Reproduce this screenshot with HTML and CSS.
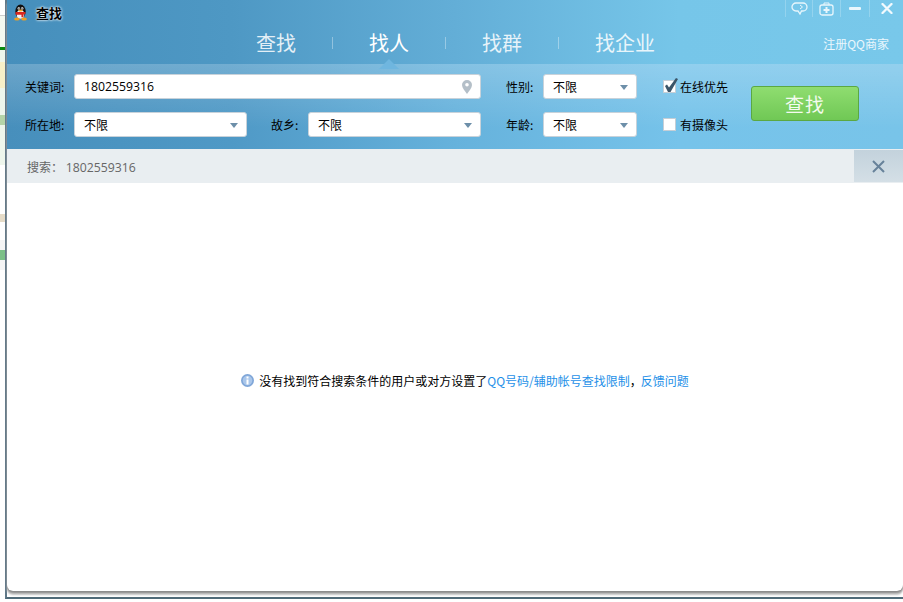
FILE: index.html
```html
<!DOCTYPE html>
<html lang="zh-CN">
<head>
  <meta charset="UTF-8" />
  <title>查找</title>
  <link rel="stylesheet" href="styles.css">
</head>
<body>
  <div class="stage">
    <div class="behind">
      <div class="strip strip-a"></div>
      <div class="strip strip-b"></div>
      <div class="strip strip-c"></div>
      <div class="strip strip-d"></div>
      <div class="strip strip-e"></div>
      <div class="strip strip-f"></div>
      <div class="strip strip-g"></div>
      <div class="strip strip-h"></div>
      <div class="strip strip-i"></div>
      <div class="strip strip-j"></div>
      <div class="strip strip-k"></div>
      <div class="strip strip-l"></div>
      <div class="strip strip-m"></div>
    </div>

    <div class="window">
      <div class="panel">
        <div class="banner">
          <div class="titlebar">
            <div class="title">
              <svg class="penguin" width="15" height="17" viewBox="0 0 16 18">
                <ellipse cx="8" cy="8" rx="5.5" ry="7.5" fill="#111"/>
                <ellipse cx="8" cy="11" rx="4" ry="4.6" fill="#f4f4f4"/>
                <circle cx="6.2" cy="4.6" r="1.3" fill="#fff"/>
                <circle cx="9.8" cy="4.6" r="1.3" fill="#fff"/>
                <circle cx="6.4" cy="4.8" r=".6" fill="#111"/>
                <circle cx="9.6" cy="4.8" r=".6" fill="#111"/>
                <ellipse cx="8" cy="6.8" rx="2.2" ry="1" fill="#f0a820"/>
                <path d="M2.8 8.5h10.4v2l-2 .5v3h-2.2v-2.6H2.8z" fill="#d8261c"/>
                <ellipse cx="4.2" cy="16" rx="3" ry="1.6" fill="#f0a020"/>
                <ellipse cx="11.8" cy="16" rx="3" ry="1.6" fill="#f0a020"/>
              </svg>
              <span class="title-text">查找</span>
            </div>
            <div class="controls">
              <div class="ctrl ctrl-feedback">
                <svg width="17" height="13" viewBox="0 0 17 13" fill="none" stroke="#e8f6fc" stroke-width="1.3">
                  <path d="M5 1h7a4 4 0 0 1 0 8h-1.500l-1.500 3-2-3H5a4 4 0 0 1 0-8z"/>
                  <path d="M9 3l2.500 2L9 7" stroke-width="1"/>
                </svg>
              </div>
              <div class="ctrl ctrl-add">
                <svg width="15" height="14" viewBox="0 0 15 14" fill="none" stroke="#e8f6fc">
                  <rect x="1" y="3" width="13" height="10" rx="2" stroke-width="1.300"/>
                  <path d="M5 3V1h5v2" stroke-width="1"/>
                  <path d="M7.500 5v6M4.500 8h6" stroke-width="2"/>
                </svg>
              </div>
              <div class="ctrl ctrl-min">
                <svg width="12" height="3" viewBox="0 0 12 3"><rect width="12" height="3" rx="1" fill="#eaf7fd"/></svg>
              </div>
              <div class="ctrl ctrl-close">
                <svg width="12" height="11" viewBox="0 0 12 11" stroke="#f2fafe" stroke-width="2.300" stroke-linecap="round">
                  <path d="M1.500 1l9 9M10.500 1l-9 9"/>
                </svg>
              </div>
            </div>
          </div>
          <div class="tabs">
            <a class="tab" href="#">查找</a>
            <span class="tab-sep"></span>
            <a class="tab active" href="#">找人</a>
            <span class="tab-sep"></span>
            <a class="tab" href="#">找群</a>
            <span class="tab-sep"></span>
            <a class="tab tab-last" href="#">找企业</a>
            <a class="register" href="#">注册QQ商家</a>
          </div>
        </div>

        <div class="filters">
          <div class="filter-rows">
            <div class="filter-row">
              <label class="field-label">关键词:</label>
              <div class="box keyword">
                <span class="number">1802559316</span>
                <svg width="10" height="14" viewBox="0 0 10 14">
                  <path d="M5 0a5 5 0 0 1 5 5c0 3-3 6-5 9-2-3-5-6-5-9a5 5 0 0 1 5-5z" fill="#b4bfc8"/>
                  <circle cx="5" cy="4.800" r="1.800" fill="#fff"/>
                </svg>
              </div>
              <label class="field-label short gap-sex">性别:</label>
              <div class="box select small"><span>不限</span><i class="caret"></i></div>
              <label class="check">
                <span class="checkbox">
                  <svg width="15" height="15" viewBox="0 0 15 15">
                    <path d="M1 8l2-1.500 2 3L12 0l2 1-7.500 13H4z" fill="#3b5468"/>
                  </svg>
                </span>
                在线优先
              </label>
            </div>
            <div class="filter-row">
              <label class="field-label">所在地:</label>
              <div class="box select wide"><span>不限</span><i class="caret"></i></div>
              <label class="field-label short gap-home">故乡:</label>
              <div class="box select wide"><span>不限</span><i class="caret"></i></div>
              <label class="field-label short gap-age">年龄:</label>
              <div class="box select small"><span>不限</span><i class="caret"></i></div>
              <label class="check"><span class="checkbox"></span>有摄像头</label>
            </div>
          </div>
          <button class="search-btn">查找</button>
        </div>

        <div class="subheader">
          <div class="query">搜索： <span class="number">1802559316</span></div>
          <div class="sub-close">
            <svg width="13" height="13" viewBox="0 0 13 13" stroke="#67829a" stroke-width="2">
              <path d="M1 1l11 11M12 1L1 12"/>
            </svg>
          </div>
        </div>

        <div class="results">
          <div class="message">
            <svg class="info" width="13" height="13" viewBox="0 0 13 13">
              <circle cx="6.500" cy="6.500" r="6.500" fill="#7fa6d8"/>
              <circle cx="6.500" cy="6.500" r="4.800" fill="#a9c6ea"/>
              <rect x="5.500" y="2.500" width="2" height="2" fill="#fff"/>
              <rect x="5.500" y="5.500" width="2" height="5" fill="#fff"/>
            </svg>
            <span>没有找到符合搜索条件的用户或对方设置了</span><a href="#">QQ号码/辅助帐号查找限制</a><span class="comma">，</span><a href="#">反馈问题</a>
          </div>
        </div>
      </div>
    </div>
  </div>
</body>
</html>
```

FILE: styles.css
```css
body {
  margin: 0;
  background-color: #fff;
  font-family: "Noto Sans CJK SC", sans-serif;
  font-size: 12px;
  color: #000;
  overflow: hidden;
}

a {
  text-decoration: none;
}

.stage {
  display: flex;
  height: 599px;
}

/* the page showing behind the window */
.behind {
  width: 5px;
  flex-shrink: 0;
}

.strip-a { height: 15px; background-color: #fff; }
.strip-b { height: 32px; background-color: #f3f8f0; border-top: 1px solid #ccc; box-sizing: border-box; }
.strip-c { height: 3px; background-color: #078a0c; }
.strip-d { height: 12px; background-color: #eef6ec; }
.strip-e { height: 26px; background-color: #f8f0c8; }
.strip-f { height: 27px; background-color: #eef6ec; }
.strip-g { height: 10px; background-color: #b4d4a8; }
.strip-h { height: 40px; background-color: #eef6ec; }
.strip-i { height: 49px; background-color: #fff; }
.strip-j { height: 8px; background-color: #e6dcc8; }
.strip-k { height: 18px; background-color: #fff; }
.strip-l { height: 20px; background-color: #7cc088; border-top: 10px solid #f4f4f4; box-sizing: border-box; }
.strip-m { height: 10px; background-color: #f4f4f4; }

.window {
  flex: 1;
  border-left: 2px solid #5f7787;
  border-bottom: 2px solid #4f6a78;
  background-color: #fff;
  min-width: 0;
}

.panel {
  display: flex;
  flex-direction: column;
  height: 591px;
  border-radius: 0 0 6px 6px;
  box-shadow: 0 2px 2px #8a8a8a, 0 4px 2px #c8c8c8;
}

.banner {
  height: 64px;
  background: linear-gradient(90deg, #468fbc 0%, #4e98c4 25%, #63aed7 50%, #76c6e9 75%, #78c8ea 100%);
}

.titlebar {
  display: flex;
  justify-content: space-between;
  height: 25px;
}

.title {
  display: flex;
  align-items: flex-start;
  gap: 8px;
  padding: 4px 0 0 6px;
}

.title-text {
  font-size: 13px;
  font-weight: bold;
  line-height: 17px;
  text-shadow: 0 0 3px #fff, 0 0 2px #fff;
}

.controls {
  display: flex;
  height: 17px;
}

.ctrl {
  display: flex;
  align-items: center;
  justify-content: center;
  border-left: 1px solid rgba(255, 255, 255, 0.22);
}

.ctrl-feedback { width: 26px; }
.ctrl-add { width: 27px; }
.ctrl-min { width: 28px; }
.ctrl-close { width: 33px; }

.tabs {
  display: flex;
  align-items: center;
  height: 39px;
  padding-left: 213px;
  padding-right: 14px;
}

.tab {
  position: relative;
  width: 112px;
  text-align: center;
  font-size: 20px;
  line-height: 36px;
  margin-top: -3px;
  color: rgba(255, 255, 255, 0.85);
}

.tab-last {
  width: 132px;
}

.tab.active {
  color: #fff;
}

.tab.active::after {
  content: "";
  position: absolute;
  left: 46px;
  bottom: -8px;
  border-left: 10px solid transparent;
  border-right: 10px solid transparent;
  border-bottom: 10px solid #6fb6df;
}

.tab-sep {
  width: 1px;
  height: 12px;
  margin-top: -3px;
  background-color: rgba(255, 255, 255, 0.35);
}

.register {
  margin-left: auto;
  margin-top: -3px;
  color: #eaf7fd;
}

.filters {
  display: flex;
  align-items: flex-start;
  box-sizing: border-box;
  height: 85px;
  padding: 10px 0 0 18px;
  background:
    linear-gradient(180deg, rgba(255, 255, 255, 0.2) 0%, rgba(255, 255, 255, 0) 75%),
    linear-gradient(90deg, #478fbc 0%, #4f99c6 25%, #66b2dc 50%, #76c3ea 75%, #78c4e9 100%);
}

.filter-rows {
  display: flex;
  flex-direction: column;
  gap: 13px;
}

.filter-row {
  display: flex;
  align-items: center;
  height: 25px;
}

.field-label {
  width: 40px;
  margin-right: 9px;
  white-space: nowrap;
}

.field-label.short {
  width: 28px;
}

.gap-sex { margin-left: 25px; }
.gap-home { margin-left: 24px; }
.gap-age { margin-left: 25px; }

.box {
  display: flex;
  align-items: center;
  justify-content: space-between;
  box-sizing: border-box;
  height: 25px;
  padding: 0 8px 0 9px;
  background-color: #fff;
  border: 1px solid #c8d2da;
  border-radius: 3px;
}

.keyword { width: 407px; }
.select.wide { width: 173px; }
.select.small { width: 94px; }

.number {
  font-family: "Open Sans", sans-serif;
  font-size: 12.250px;
}

.caret {
  width: 0;
  height: 0;
  margin-top: 1px;
  border-left: 4.500px solid transparent;
  border-right: 4.500px solid transparent;
  border-top: 5px solid #6d8fa9;
}

.check {
  display: flex;
  align-items: center;
  gap: 4px;
  margin-left: 26px;
  white-space: nowrap;
}

.checkbox {
  position: relative;
  box-sizing: border-box;
  width: 13px;
  height: 13px;
  background-color: #fff;
  border: 1px solid #c5ced6;
}

.checkbox svg {
  position: absolute;
  left: 0;
  top: -3px;
}

.search-btn {
  box-sizing: border-box;
  width: 108px;
  height: 35px;
  margin: 12px 0 0 23px;
  font-family: inherit;
  font-size: 19px;
  letter-spacing: 1px;
  color: #f4fbef;
  background: linear-gradient(180deg, #8fdd70 0%, #70c855 100%);
  border: 1px solid #5ba842;
  border-radius: 3px;
  cursor: pointer;
}

.subheader {
  display: flex;
  align-items: flex-start;
  justify-content: space-between;
  height: 34px;
  background-color: #e9eef1;
  color: #666;
}

.query {
  padding: 9px 0 0 20px;
  line-height: 17px;
}

.sub-close {
  display: flex;
  align-items: center;
  justify-content: center;
  width: 49px;
  height: 32px;
  margin-top: 1px;
  background: linear-gradient(180deg, #c3d2dc 0%, #d4dfe6 100%);
}

.results {
  flex: 1;
  display: flex;
  align-items: center;
  justify-content: center;
  padding: 0 0 14px 20px;
}

.message {
  display: flex;
  align-items: center;
  white-space: nowrap;
}

.info {
  margin-right: 5px;
}

.message a {
  color: #1e90e8;
}

.comma {
  width: 11px;
}
```
